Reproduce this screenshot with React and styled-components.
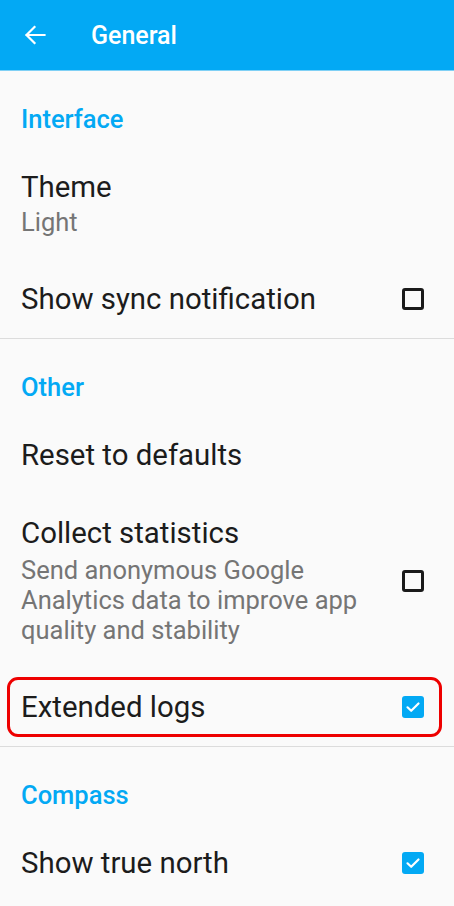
import React from 'react';
import styled, { createGlobalStyle } from 'styled-components';

const GlobalStyle = createGlobalStyle`
  html, body {
    margin: 0;
    padding: 0;
    background: #fafafa;
    font-family: Roboto, "Noto Sans", "Liberation Sans", sans-serif;
  }
`

const Page = styled.div`
  width: 454px;
  min-height: 906px;
  background: #fafafa;
`

const Toolbar = styled.div`
  height: 70px;
  background: #03a9f4;
  display: flex;
  align-items: center;
  box-shadow: 0 1px 0 #7fd0f5;
`

const BackButton = styled.div`
  width: 91px;
  display: flex;
  align-items: center;
  padding-left: 24px;
  box-sizing: border-box;
`

const ToolbarTitle = styled.h1`
  margin: 0;
  font-size: 25px;
  font-weight: 500;
  color: #fff;
`

const Category = styled.div`
  padding: ${props => props.first ? 34 : 33}px 21px 14px;
  font-size: 25.5px;
  line-height: 30px;
  font-weight: 500;
  color: #03a9f4;
`

const Row = styled.div`
  position: relative;
  display: flex;
  align-items: center;
  padding: 21px 30px 21px 21px;
  gap: 30px;
  &::after {
    content: '';
    display: ${props => props.highlight ? 'block' : 'none'};
    position: absolute;
    top: 9px;
    bottom: 9px;
    left: 7px;
    right: 12px;
    border: 3px solid #ee0000;
    border-radius: 11px;
    pointer-events: none;
  }
`

const TextCol = styled.div`
  flex: 1;
  display: flex;
  flex-direction: column;
`

const Title = styled.div`
  font-size: 29.4px;
  line-height: 36px;
  color: #1c1c1c;
`

const Summary = styled.div`
  font-size: 25.5px;
  line-height: 30px;
  margin-top: ${props => props.gap}px;
  margin-bottom: 2px;
  color: #757575;
`

const Divider = styled.div`
  height: 1px;
  background: #dcdcdc;
`

const Box = styled.div`
  width: 22px;
  height: 22px;
  flex-shrink: 0;
  box-sizing: border-box;
  border-radius: 3px;
  border: ${props => props.checked ? 'none' : '3px solid #1a1a1a'};
  background: ${props => props.checked ? '#03a9f4' : 'transparent'};
  display: flex;
  align-items: center;
  justify-content: center;
`

const Checkbox = ({ checked }) => (
  <Box checked={checked}>
    {checked && (
      <svg width="16" height="16" viewBox="0 0 16 16">
        <path d="M2.5 8.3 L6.2 11.8 L13.5 4.5" fill="none" stroke="#fff" strokeWidth="2.2" strokeLinecap="round" strokeLinejoin="round" />
      </svg>
    )}
  </Box>
)

const Pref = ({ title, summary, checkbox, checked, highlight }) => (
  <Row highlight={highlight}>
    <TextCol>
      <Title>{title}</Title>
      {summary && <Summary gap={summary.length > 20 ? 4 : 2}>{summary}</Summary>}
    </TextCol>
    {checkbox && <Checkbox checked={checked} />}
  </Row>
)

const App = () => {
  return (
    <Page>
      <GlobalStyle />
      <Toolbar>
        <BackButton>
          <svg width="22" height="22" viewBox="0 0 22 22">
            <path d="M20.5 11 H2.5 M10.5 3 L2.5 11 L10.5 19" fill="none" stroke="#fff" strokeWidth="2.2" strokeLinecap="square" strokeLinejoin="miter" />
          </svg>
        </BackButton>
        <ToolbarTitle>General</ToolbarTitle>
      </Toolbar>

      <Category first>Interface</Category>
      <Pref title="Theme" summary="Light" />
      <Pref title="Show sync notification" checkbox />
      <Divider />

      <Category>Other</Category>
      <Pref title="Reset to defaults" />
      <Pref title="Collect statistics" summary="Send anonymous Google Analytics data to improve app quality and stability" checkbox />
      <Pref title="Extended logs" checkbox checked highlight />
      <Divider />

      <Category>Compass</Category>
      <Pref title="Show true north" checkbox checked />
    </Page>
  )
}

export default App
